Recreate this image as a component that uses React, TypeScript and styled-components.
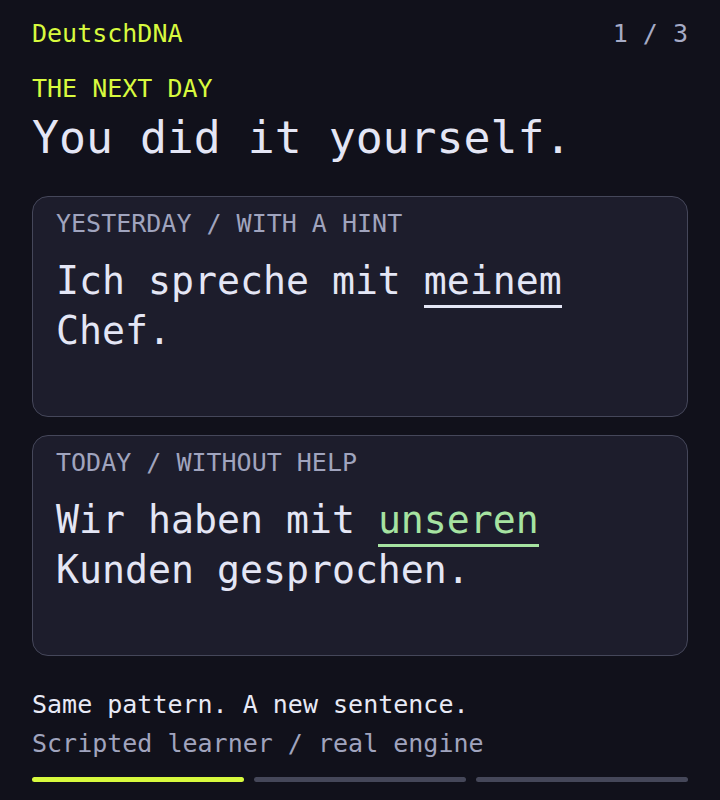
import React from "react";
import styled, { createGlobalStyle } from "styled-components";

const GlobalStyle = createGlobalStyle`
  html, body {
    margin: 0;
    padding: 0;
    background: #11111b;
  }
  body {
    font-family: "DejaVu Sans Mono", "Liberation Mono", monospace;
    color: #e4e6f5;
  }
`;

const Screen = styled.main`
  box-sizing: border-box;
  width: 720px;
  min-height: 800px;
  padding: 19px 32px 20px;
  display: flex;
  flex-direction: column;
`;

const TopBar = styled.header`
  display: flex;
  justify-content: space-between;
  align-items: baseline;
  font-size: 25px;
  line-height: 30px;
`;

const Brand = styled.span`
  color: #d8fa3e;
`;

const Counter = styled.span`
  color: #a6abc6;
`;

const Eyebrow = styled.div`
  margin-top: 25px;
  font-size: 25px;
  line-height: 30px;
  color: #d8fa3e;
`;

const Title = styled.h1`
  margin: 7px 0 0;
  font-size: 44.8px;
  line-height: 1.2;
  font-weight: 400;
  color: #e4e6f5;
`;

const Cards = styled.section`
  margin-top: 31px;
  display: flex;
  flex-direction: column;
  gap: 18px;
`;

const Card = styled.article`
  box-sizing: border-box;
  min-height: 221px;
  padding: 12px 23px;
  background: #1d1d2c;
  border: 1px solid #45475a;
  border-radius: 16px;
`;

const CardLabel = styled.div`
  font-size: 25px;
  line-height: 30px;
  color: #a0a4be;
`;

const Sentence = styled.p`
  margin: 17px 0 0;
  font-size: 38.2px;
  line-height: 50px;
  color: #e4e6f5;
`;

const Marked = styled.span<{ $tone: string }>`
  color: ${(p) => p.$tone};
  padding-bottom: 2px;
  border-bottom: 3px solid ${(p) => p.$tone};
`;

const Note = styled.p`
  margin: 34px 0 0;
  font-size: 25px;
  line-height: 30px;
  color: #e8eaf6;
`;

const SubNote = styled.p`
  margin: 9px 0 0;
  font-size: 25px;
  line-height: 30px;
  color: #a0a4be;
`;

const Progress = styled.div`
  margin-top: 18px;
  display: grid;
  grid-template-columns: repeat(3, 1fr);
  gap: 10px;
`;

const Step = styled.div<{ $active: boolean }>`
  height: 5px;
  border-radius: 3px;
  background: ${(p) => (p.$active ? "#d8fa3e" : "#454759")};
`;

const steps = [true, false, false];

export default function App() {
  return (
    <>
      <GlobalStyle />
      <Screen>
        <TopBar>
          <Brand>DeutschDNA</Brand>
          <Counter>1 / 3</Counter>
        </TopBar>
        <Eyebrow>THE NEXT DAY</Eyebrow>
        <Title>You did it yourself.</Title>
        <Cards>
          <Card>
            <CardLabel>YESTERDAY / WITH A HINT</CardLabel>
            <Sentence>
              Ich spreche mit <Marked $tone="#e4e6f5">meinem</Marked> Chef.
            </Sentence>
          </Card>
          <Card>
            <CardLabel>TODAY / WITHOUT HELP</CardLabel>
            <Sentence>
              Wir haben mit <Marked $tone="#a6e3a1">unseren</Marked> Kunden
              gesprochen.
            </Sentence>
          </Card>
        </Cards>
        <Note>Same pattern. A new sentence.</Note>
        <SubNote>Scripted learner / real engine</SubNote>
        <Progress>
          {steps.map((active, i) => (
            <Step key={i} $active={active} />
          ))}
        </Progress>
      </Screen>
    </>
  );
}
